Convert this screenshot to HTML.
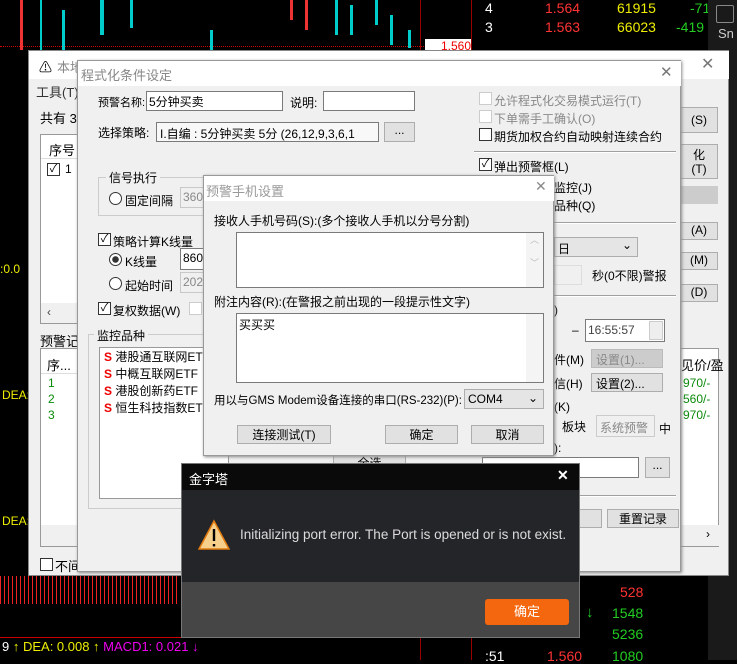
<!DOCTYPE html>
<html><head><meta charset="utf-8"><style>
*{box-sizing:border-box;margin:0;padding:0}
body{width:737px;height:660px;background:#000;position:relative;overflow:hidden;font-family:"Liberation Sans","Noto Sans CJK SC",sans-serif;font-size:12px;color:#000}
.a{position:absolute;white-space:nowrap}
.inp{position:absolute;background:#fff;border:1px solid #7a7a7a}
.dis{position:absolute;background:#f0f0f0;border:1px solid #c8c8c8;color:#888}
.btn{position:absolute;background:#e1e1e1;border:1px solid #adadad;text-align:center}
.cb{position:absolute;width:13px;height:13px;border:1px solid #333;background:#fff;font-size:11px;line-height:11px;text-align:center}
.rd{position:absolute;width:13px;height:13px;border:1px solid #333;border-radius:50%;background:#fff}
.sep{position:absolute;height:2px;border-top:1px solid #a0a0a0;border-bottom:1px solid #fff}
.g{color:#0a8a0a}
</style></head><body>

<!-- top chart -->
<div class="a" style="left:0;top:46px;width:470px;border-top:1px dotted #c00"></div>
<div class="a" style="left:20px;top:0;width:3px;height:50px;background:#e33"></div>
<div class="a" style="left:40px;top:0;width:2px;height:50px;background:#0cc"></div>
<div class="a" style="left:62px;top:10px;width:3px;height:40px;background:#0cc"></div>
<div class="a" style="left:100px;top:0;width:4px;height:35px;background:#0cc"></div>
<div class="a" style="left:130px;top:0;width:3px;height:28px;background:#0cc"></div>
<div class="a" style="left:210px;top:30px;width:3px;height:20px;background:#0cc"></div>
<div class="a" style="left:290px;top:0;width:3px;height:20px;background:#e33"></div>
<div class="a" style="left:305px;top:0;width:3px;height:30px;background:#e33"></div>
<div class="a" style="left:335px;top:0;width:3px;height:35px;background:#0cc"></div>
<div class="a" style="left:350px;top:5px;width:3px;height:30px;background:#0cc"></div>
<div class="a" style="left:375px;top:0;width:3px;height:25px;background:#0cc"></div>
<div class="a" style="left:390px;top:15px;width:3px;height:30px;background:#0cc"></div>
<div class="a" style="left:408px;top:30px;width:3px;height:18px;background:#0cc"></div>
<div class="a" style="left:420px;top:0;width:1px;height:660px;background:#900"></div>
<div class="a" style="left:425px;top:39px;width:46px;height:14px;background:#fff;color:#e00;font-size:12px;line-height:14px;text-align:right">1.560</div>
<div class="a" style="left:471px;top:0;width:1px;height:660px;background:#900"></div>
<div class="a" style="left:485px;top:0;color:#fff;font-size:14px">4</div>
<div class="a" style="left:485px;top:19px;color:#fff;font-size:14px">3</div>
<div class="a" style="left:545px;top:0;color:#f33;font-size:14px">1.564</div>
<div class="a" style="left:545px;top:19px;color:#f33;font-size:14px">1.563</div>
<div class="a" style="left:617px;top:0;color:#ee0;font-size:14px">61915</div>
<div class="a" style="left:617px;top:19px;color:#ee0;font-size:14px">66023</div>
<div class="a" style="left:690px;top:0;color:#2c2;font-size:14px">-71</div>
<div class="a" style="left:676px;top:19px;color:#2c2;font-size:14px">-419</div>
<div class="a" style="left:708px;top:0;width:29px;height:660px;background:#1a1a1a"></div>
<div class="a" style="left:716px;top:5px;width:18px;height:18px;border:1px solid #888;border-radius:2px"></div>
<div class="a" style="left:718px;top:26px;color:#ccc;font-size:13px">Sn</div>

<!-- bottom -->
<div class="a" style="left:0;top:576px;width:180px;height:28px;background:repeating-linear-gradient(90deg,#e22 0 1px,transparent 1px 4px)"></div>
<div class="a" style="left:0;top:637px;width:470px;height:1px;background:#c00"></div>
<div class="a" style="left:2px;top:639px;font-size:13px;color:#fff">9<span style="color:#ee0"> ↑ DEA: 0.008 ↑</span><span style="color:#e0e"> MACD1: 0.021 ↓</span></div>
<div class="a" style="left:620px;top:584px;color:#f33;font-size:14px">528</div>
<div class="a" style="left:586px;top:604px;color:#2c2;font-size:15px">↓</div>
<div class="a" style="left:612px;top:605px;color:#2c2;font-size:14px">1548</div>
<div class="a" style="left:612px;top:626px;color:#2c2;font-size:14px">5236</div>
<div class="a" style="left:485px;top:648px;color:#fff;font-size:14px">:51</div>
<div class="a" style="left:547px;top:648px;color:#f33;font-size:14px">1.560</div>
<div class="a" style="left:612px;top:648px;color:#2c2;font-size:14px">1080</div>
<div class="a" style="left:2px;top:388px;color:#ee0;font-size:12px">DEA:</div>
<div class="a" style="left:2px;top:514px;color:#ee0;font-size:12px">DEA:</div>
<div class="a" style="left:0;top:262px;color:#ee0;font-size:12px">:0.0</div>

<!-- outer window -->
<div class="a" style="left:28px;top:50px;width:701px;height:526px;background:#f0f0f0;border:1px solid #888">
  <div class="a" style="left:0;top:0;width:700px;height:28px;background:#fff"></div>
  <div class="a" style="left:10px;top:6px;font-size:13px">⚠</div>
  <div class="a" style="left:28px;top:6px;color:#888;font-size:13px">本地</div>
  <div class="a" style="left:672px;top:3px;color:#777;font-size:16px">✕</div>
  <div class="a" style="left:7px;top:31px;font-size:13px;color:#333">工具(T)</div>
  <div class="a" style="left:11px;top:57px;font-size:13px">共有 3</div>
  <div class="a" style="left:11px;top:83px;width:40px;height:190px;background:#fff;border:1px solid #999">
    <div class="a" style="left:0;top:0;width:40px;height:24px;border-bottom:1px solid #ddd;padding:5px 0 0 8px;font-size:13px">序号</div>
    <div class="cb" style="left:6px;top:28px">✓</div><div class="a" style="left:24px;top:27px">1</div>
    <div class="a" style="left:0;top:168px;width:40px;height:20px;background:#f0f0f0"></div>
    <div class="a" style="left:6px;top:170px;color:#444">‹</div>
  </div>
  <div class="a" style="left:11px;top:280px;font-size:13px">预警记录</div>
  <div class="a" style="left:11px;top:297px;width:40px;height:199px;background:#fff;border:1px solid #999">
    <div class="a" style="left:0;top:0;width:40px;height:25px;border-bottom:1px solid #ddd;padding:6px 0 0 6px;font-size:13px">序...</div>
    <div class="a g" style="left:7px;top:27px">1</div><div class="a g" style="left:7px;top:43px">2</div><div class="a g" style="left:7px;top:59px">3</div>
    <div class="a" style="left:0;top:176px;width:40px;height:21px;background:#f0f0f0"></div>
  </div>
  <div class="cb" style="left:11px;top:507px"></div><div class="a" style="left:26px;top:505px;font-size:13px">不间</div>
  <!-- right buttons -->
  <div class="btn" style="left:651px;top:56px;width:38px;height:26px;line-height:24px">(S)</div>
  <div class="btn" style="left:651px;top:93px;width:38px;height:35px;line-height:14px;padding-top:3px">化<br>(T)</div>
  <div class="a" style="left:651px;top:135px;width:38px;height:18px;background:#ccc"></div>
  <div class="btn" style="left:651px;top:171px;width:38px;height:18px">(A)</div>
  <div class="btn" style="left:651px;top:201px;width:38px;height:18px">(M)</div>
  <div class="btn" style="left:651px;top:233px;width:38px;height:18px">(D)</div>
  <div class="a" style="left:651px;top:297px;width:39px;height:199px;background:#fff;border:1px solid #999">
    <div class="a" style="left:0;top:0;height:25px;padding-top:6px;font-size:13px">见价/盈</div>
    <div class="a g" style="left:2px;top:27px">970/-</div><div class="a g" style="left:2px;top:43px">560/-</div><div class="a g" style="left:2px;top:59px">970/-</div>
    <div class="a" style="left:0;top:176px;width:38px;height:21px;background:#f0f0f0"></div>
    <div class="a" style="left:25px;top:178px">›</div>
  </div>
</div>

<!-- middle window -->
<div class="a" style="left:77px;top:60px;width:604px;height:512px;background:#f0f0f0;border:1px solid #999;box-shadow:1px 1px 3px #888">
  <div class="a" style="left:0;top:0;width:603px;height:25px;background:#fff"></div>
  <div class="a" style="left:3px;top:4px;color:#888;font-size:13px">程式化条件设定</div>
  <div class="a" style="left:582px;top:2px;color:#777;font-size:15px">✕</div>
  <div class="a" style="left:20px;top:33px;font-size:11px">预警名称:</div>
  <div class="inp" style="left:68px;top:30px;width:137px;height:20px;padding:1px 2px;font-size:12px">5分钟买卖</div>
  <div class="a" style="left:212px;top:33px;font-size:12px">说明:</div>
  <div class="inp" style="left:245px;top:30px;width:92px;height:20px"></div>
  <div class="a" style="left:20px;top:63px;font-size:12px">选择策略:</div>
  <div class="a" style="left:78px;top:61px;width:223px;height:20px;background:#f8f8f8;border:1px solid #7a7a7a;padding:2px 3px;overflow:hidden;font-size:12px">I.自编 : 5分钟买卖 5分 (26,12,9,3,6,1</div>
  <div class="btn" style="left:306px;top:61px;width:31px;height:20px">...</div>
  <!-- signal group -->
  <div class="a" style="left:20px;top:116px;width:140px;height:39px;border:1px solid #ccc"></div>
  <div class="a" style="left:28px;top:108px;background:#f0f0f0;padding:0 3px;font-size:12px">信号执行</div>
  <div class="rd" style="left:31px;top:131px"></div><div class="a" style="left:47px;top:131px;font-size:12px">固定间隔</div>
  <div class="dis" style="left:102px;top:126px;width:30px;height:21px;padding:2px">3600</div>
  <div class="cb" style="left:20px;top:172px">✓</div><div class="a" style="left:35px;top:172px;font-size:12px">策略计算K线量</div>
  <div class="rd" style="left:31px;top:192px;background:radial-gradient(#333 3px,#fff 3.5px)"></div><div class="a" style="left:47px;top:192px;font-size:12px">K线量</div>
  <div class="inp" style="left:102px;top:187px;width:30px;height:22px;padding:2px">860</div>
  <div class="rd" style="left:31px;top:216px"></div><div class="a" style="left:47px;top:216px;font-size:12px">起始时间</div>
  <div class="dis" style="left:102px;top:211px;width:30px;height:21px;padding:2px">2025</div>
  <div class="cb" style="left:20px;top:241px">✓</div><div class="a" style="left:35px;top:241px;font-size:12px">复权数据(W)</div>
  <div class="a" style="left:111px;top:241px;width:13px;height:13px;border:1px solid #ccc;background:#fff"></div>
  <!-- monitor group -->
  <div class="a" style="left:10px;top:273px;width:300px;height:175px;border:1px solid #ccc"></div>
  <div class="a" style="left:16px;top:266px;background:#f0f0f0;padding:0 3px;font-size:12px">监控品种</div>
  <div class="a" style="left:21px;top:286px;width:130px;height:152px;background:#fff;border:1px solid #999;font-size:12px;line-height:17px;padding:1px 0 0 4px">
    <div><b style="color:#e00">S</b> 港股通互联网ETF</div><div><b style="color:#e00">S</b> 中概互联网ETF</div><div><b style="color:#e00">S</b> 港股创新药ETF</div><div><b style="color:#e00">S</b> 恒生科技指数ETF</div>
  </div>
  <div class="btn" style="left:255px;top:392px;width:73px;height:18px;font-size:12px">全选</div>
  <!-- right column -->
  <div class="a" style="left:401px;top:31px;width:13px;height:13px;border:1px solid #ccc;background:#fff"></div><div class="a" style="left:416px;top:31px;color:#888;font-size:12px">允许程式化交易模式运行(T)</div>
  <div class="a" style="left:401px;top:49px;width:13px;height:13px;border:1px solid #ccc;background:#fff"></div><div class="a" style="left:416px;top:49px;color:#888;font-size:12px">下单需手工确认(O)</div>
  <div class="cb" style="left:401px;top:67px"></div><div class="a" style="left:416px;top:67px;font-size:12px">期货加权合约自动映射连续合约</div>
  <div class="sep" style="left:396px;top:90px;width:202px"></div>
  <div class="cb" style="left:401px;top:97px">✓</div><div class="a" style="left:416px;top:97px;font-size:12px">弹出预警框(L)</div>
  <div class="a" style="left:476px;top:118px;font-size:12px">监控(J)</div>
  <div class="a" style="left:476px;top:136px;font-size:12px">品种(Q)</div>
  <div class="sep" style="left:396px;top:161px;width:202px"></div>
  <div class="a" style="left:476px;top:176px;width:84px;height:20px;background:#e5e5e5;border:1px solid #adadad;padding:2px 3px;font-size:12px">日<span style="position:absolute;right:5px;top:0">⌄</span></div>
  <div class="a" style="left:476px;top:204px;width:28px;height:20px;background:#f0f0f0;border:1px solid #ddd"></div>
  <div class="a" style="left:514px;top:206px;font-size:12px">秒(0不限)警报</div>
  <div class="sep" style="left:396px;top:234px;width:202px"></div>
  <div class="a" style="left:476px;top:242px">)</div>
  <div class="a" style="left:494px;top:262px">–</div>
  <div class="a" style="left:507px;top:258px;width:80px;height:23px;background:#fff;border:1px solid #7a7a7a;padding:3px 2px;color:#444">16:55:57<span style="position:absolute;right:1px;top:1px;width:14px;height:19px;background:#eee;border:1px solid #ccc"></span></div>
  <div class="a" style="left:476px;top:290px;font-size:12px">件(M)</div>
  <div class="a" style="left:513px;top:288px;width:72px;height:19px;background:#ccc;border:1px solid #bbb;color:#888;padding:1px 4px;font-size:12px">设置(1)...</div>
  <div class="a" style="left:476px;top:314px;font-size:12px">信(H)</div>
  <div class="btn" style="left:513px;top:312px;width:72px;height:19px;font-size:12px;text-align:left;padding:1px 4px">设置(2)...</div>
  <div class="a" style="left:476px;top:339px">(K)</div>
  <div class="a" style="left:484px;top:357px;font-size:12px">板块</div>
  <div class="a" style="left:518px;top:354px;width:59px;height:22px;background:#f0f0f0;border:1px solid #ccc;color:#888;padding:3px 3px;font-size:12px">系统预警</div>
  <div class="a" style="left:581px;top:359px;font-size:12px">中</div>
  <div class="a" style="left:476px;top:380px">):</div>
  <div class="inp" style="left:404px;top:396px;width:157px;height:21px"></div>
  <div class="btn" style="left:567px;top:396px;width:25px;height:21px">...</div>
  <div class="sep" style="left:396px;top:434px;width:202px"></div>
  <div class="btn" style="left:478px;top:448px;width:46px;height:19px"></div>
  <div class="btn" style="left:529px;top:448px;width:72px;height:19px;font-size:12px">重置记录</div>
</div>

<!-- phone dialog -->
<div class="a" style="left:203px;top:175px;width:351px;height:281px;background:#f0f0f0;border:1px solid #999;box-shadow:1px 1px 3px #888">
  <div class="a" style="left:0;top:0;width:350px;height:25px;background:#fff"></div>
  <div class="a" style="left:2px;top:5px;color:#999;font-size:13px">预警手机设置</div>
  <div class="a" style="left:331px;top:2px;color:#888;font-size:14px">✕</div>
  <div class="a" style="left:10px;top:36px;font-size:12px">接收人手机号码(S):(多个接收人手机以分号分割)</div>
  <div class="inp" style="left:32px;top:56px;width:308px;height:56px"><div class="a" style="right:0;top:0;width:17px;height:54px;background:#f4f4f4;color:#bbb;font-size:9px;text-align:center">︿<br><br>﹀</div></div>
  <div class="a" style="left:10px;top:117px;font-size:12px">附注内容(R):(在警报之前出现的一段提示性文字)</div>
  <div class="inp" style="left:32px;top:137px;width:308px;height:70px;padding:2px 2px;font-size:12px">买买买<div class="a" style="right:0;top:0;width:17px;height:68px;background:#f4f4f4"></div></div>
  <div class="a" style="left:10px;top:216px;font-size:11.5px">用以与GMS Modem设备连接的串口(RS-232)(P):</div>
  <div class="a" style="left:260px;top:213px;width:80px;height:20px;background:#e5e5e5;border:1px solid #adadad;padding:2px 3px;font-size:12px">COM4<span style="position:absolute;right:5px;top:1px">⌄</span></div>
  <div class="btn" style="left:33px;top:249px;width:94px;height:19px;font-size:12px">连接测试(T)</div>
  <div class="btn" style="left:181px;top:249px;width:73px;height:19px;font-size:12px">确定</div>
  <div class="btn" style="left:267px;top:249px;width:73px;height:19px;font-size:12px">取消</div>
</div>

<!-- error dialog -->
<div class="a" style="left:181px;top:463px;width:399px;height:175px;background:#464646;border:1px solid #777">
  <div class="a" style="left:0;top:0;width:397px;height:26px;background:#0a0a0a"></div>
  <div class="a" style="left:7px;top:5px;color:#fff;font-size:13px">金字塔</div>
  <div class="a" style="left:375px;top:3px;color:#fff;font-size:14px;font-weight:bold">✕</div>
  <div class="a" style="left:0;top:26px;width:397px;height:92px;background:#232529"></div>
  <svg class="a" style="left:16px;top:55px" width="32" height="32" viewBox="0 0 32 32"><path d="M16 2 L31 30 L1 30 Z" fill="#f6d08a" stroke="#e07a10" stroke-width="1.5"/><rect x="14.8" y="10" width="2.4" height="12" fill="#000"/><rect x="14.8" y="25" width="2.4" height="2.4" fill="#000"/></svg>
  <div class="a" style="left:58px;top:63px;color:#dcdcdc;font-size:13.5px">Initializing port error. The Port is opened or is not exist.</div>
  <div class="a" style="left:303px;top:135px;width:84px;height:26px;background:#f5670f;border-radius:3px;color:#fff;text-align:center;line-height:26px;font-size:13px">确定</div>
</div>
</body></html>
